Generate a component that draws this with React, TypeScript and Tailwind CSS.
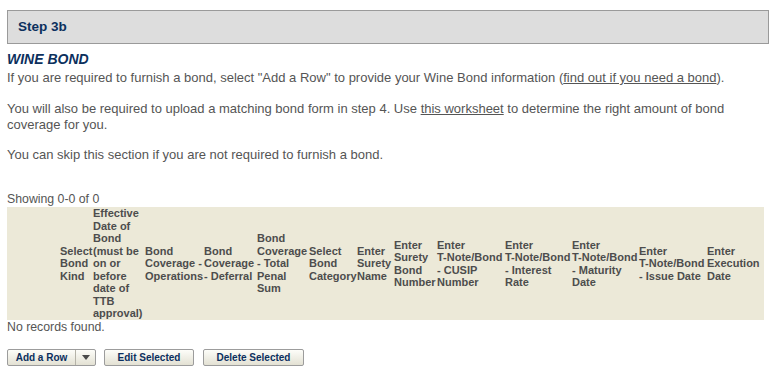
import React from 'react';

const TNote = () => <span className="whitespace-nowrap">T-Note/Bond</span>;

const columns: { label: React.ReactNode; width: string }[] = [
  { label: '', width: 'w-[53px]' },
  { label: 'Select Bond Kind', width: 'w-[33px]' },
  { label: 'Effective Date of Bond (must be on or before date of TTB approval)', width: 'w-[52px]' },
  { label: 'Bond Coverage - Operations', width: 'w-[59px]' },
  { label: 'Bond Coverage - Deferral', width: 'w-[53px]' },
  { label: 'Bond Coverage - Total Penal Sum', width: 'w-[52px]' },
  { label: 'Select Bond Category', width: 'w-[48px]' },
  { label: 'Enter Surety Name', width: 'w-[37px]' },
  { label: 'Enter Surety Bond Number', width: 'w-[43px]' },
  { label: <>Enter <TNote /> - CUSIP Number</>, width: 'w-[68px]' },
  { label: <>Enter <TNote /> - Interest Rate</>, width: 'w-[67px]' },
  { label: <>Enter <TNote /> - Maturity Date</>, width: 'w-[67px]' },
  { label: <>Enter <TNote /> - Issue Date</>, width: 'w-[68px]' },
  { label: 'Enter Execution Date', width: 'w-[57px]' },
];

const btn =
  'h-[17px] border border-[#9c9c9c] rounded-[2px] bg-gradient-to-b from-[#fdfdf9] to-[#e3e1d3] text-[10px] font-bold text-[#0b2f5e] leading-[15px] flex items-center justify-center';

export default function App() {
  return (
    <div className="px-[7px] pt-[10px] bg-white min-h-[373px] font-['Liberation_Sans',Arial,sans-serif]">
      {/* Step header */}
      <div className="h-[34px] border border-[#9a9a9a] bg-[#dddddd] flex items-center pl-[10px]">
        <span className="text-[13.5px] font-bold text-[#0c305d]">Step 3b</span>
      </div>

      <h2 className="mt-[7px] text-[14px] leading-[16px] font-bold italic text-[#0c305d]">WINE BOND</h2>

      <div className="text-[13px] leading-[16px] text-[#555555]">
        <p className="mt-[3px]">
          If you are required to furnish a bond, select "Add a Row" to provide your Wine Bond information (
          <span className="underline">find out if you need a bond</span>).
        </p>
        <p className="mt-[15px] pr-[30px]">
          You will also be required to upload a matching bond form in step 4. Use{' '}
          <span className="underline">this worksheet</span> to determine the right amount of bond coverage for you.
        </p>
        <p className="mt-[14px]">You can skip this section if you are not required to furnish a bond.</p>
      </div>

      <div className="mt-[29px] text-[12.3px] leading-[15px] text-[#555555]">Showing 0-0 of 0</div>

      {/* Grid header */}
      <table className="table-fixed w-[757px] border-collapse">
        <thead>
          <tr className="h-[113px] bg-[#ece9d8]">
            {columns.map((c, i) => (
              <th
                key={i}
                className={`${c.width} p-0 align-middle text-left text-[11px] leading-[12.5px] font-bold text-[#4d4d4d]`}
              >
                {c.label}
              </th>
            ))}
          </tr>
        </thead>
      </table>

      <div className="text-[12.3px] leading-[15px] text-[#555555]">No records found.</div>

      {/* Actions */}
      <div className="mt-[14px] flex items-center">
        <div className="flex h-[17px] border border-[#9c9c9c] rounded-[2px] bg-gradient-to-b from-[#fdfdf9] to-[#e3e1d3]">
          <div className="w-[67px] flex items-center justify-center text-[10px] font-bold text-[#0b2f5e] leading-[15px]">
            Add a Row
          </div>
          <div className="w-[20px] border-l border-[#b5b3a8] flex items-center justify-center">
            <svg width="8" height="5" viewBox="0 0 8 5">
              <polygon points="0,0 8,0 4,5" fill="#4a4a4a" />
            </svg>
          </div>
        </div>
        <div className={`${btn} ml-[8px] w-[90px]`}>Edit Selected</div>
        <div className={`${btn} ml-[9px] w-[101px]`}>Delete Selected</div>
      </div>
    </div>
  );
}
